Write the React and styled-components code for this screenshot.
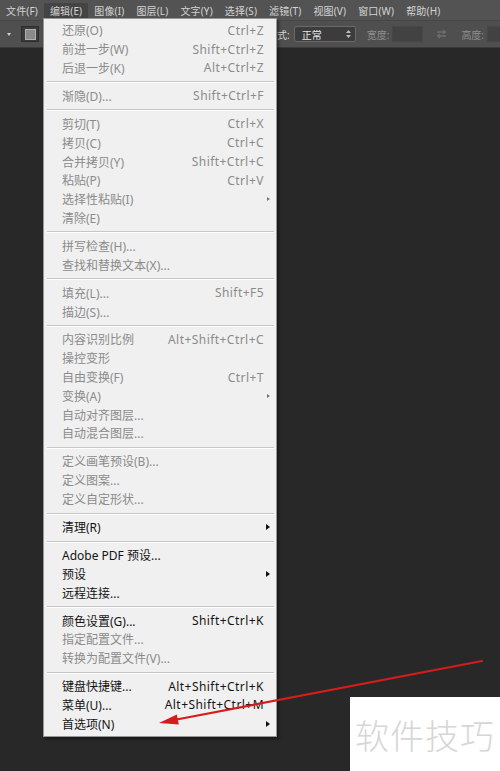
import styled, { createGlobalStyle } from 'styled-components';

const GlobalStyle = createGlobalStyle`
  body {
    margin: 0;
    background: #282828;
    font-family: "Noto Sans", "Noto Sans CJK SC", sans-serif;
  }
`;

const topMenus = ['文件(F)', '编辑(E)', '图像(I)', '图层(L)', '文字(Y)', '选择(S)', '滤镜(T)', '视图(V)', '窗口(W)', '帮助(H)'];

const sections = [
  [
    { label: '还原(O)', shortcut: 'Ctrl+Z' },
    { label: '前进一步(W)', shortcut: 'Shift+Ctrl+Z' },
    { label: '后退一步(K)', shortcut: 'Alt+Ctrl+Z' },
  ],
  [{ label: '渐隐(D)...', shortcut: 'Shift+Ctrl+F' }],
  [
    { label: '剪切(T)', shortcut: 'Ctrl+X' },
    { label: '拷贝(C)', shortcut: 'Ctrl+C' },
    { label: '合并拷贝(Y)', shortcut: 'Shift+Ctrl+C' },
    { label: '粘贴(P)', shortcut: 'Ctrl+V' },
    { label: '选择性粘贴(I)', sub: true },
    { label: '清除(E)' },
  ],
  [
    { label: '拼写检查(H)...' },
    { label: '查找和替换文本(X)...' },
  ],
  [
    { label: '填充(L)...', shortcut: 'Shift+F5' },
    { label: '描边(S)...' },
  ],
  [
    { label: '内容识别比例', shortcut: 'Alt+Shift+Ctrl+C' },
    { label: '操控变形' },
    { label: '自由变换(F)', shortcut: 'Ctrl+T' },
    { label: '变换(A)', sub: true },
    { label: '自动对齐图层...' },
    { label: '自动混合图层...' },
  ],
  [
    { label: '定义画笔预设(B)...' },
    { label: '定义图案...' },
    { label: '定义自定形状...' },
  ],
  [{ label: '清理(R)', sub: true, on: true }],
  [
    { label: 'Adobe PDF 预设...', on: true },
    { label: '预设', sub: true, on: true },
    { label: '远程连接...', on: true },
  ],
  [
    { label: '颜色设置(G)...', shortcut: 'Shift+Ctrl+K', on: true },
    { label: '指定配置文件...' },
    { label: '转换为配置文件(V)...' },
  ],
  [
    { label: '键盘快捷键...', shortcut: 'Alt+Shift+Ctrl+K', on: true },
    { label: '菜单(U)...', shortcut: 'Alt+Shift+Ctrl+M', on: true },
    { label: '首选项(N)', sub: true, on: true },
  ],
];

function App() {
  return (
    <Page>
      <GlobalStyle />
      <MenuBar>
        {topMenus.map((m) => (
          <TopItem key={m} $active={m === '编辑(E)'}>
            {m}
          </TopItem>
        ))}
      </MenuBar>
      <OptionsBar>
        <ToolArrow />
        <PresetIcon>
          <PresetInner />
        </PresetIcon>
        <OptLabel $gap={228}>样式:</OptLabel>
        <Select>
          正常
          <UpDown>
            <svg width="5" height="8" viewBox="0 0 5 8">
              <path d="M0 3 L2.5 0 L5 3 Z M0 5 L2.5 8 L5 5 Z" fill="#bdbdbd" />
            </svg>
          </UpDown>
        </Select>
        <OptLabel $gap={11} $dim>宽度:</OptLabel>
        <Field $w={31} />
        <SwapIcon>
          <svg width="11" height="10" viewBox="0 0 11 10">
            <path d="M1 3 H9 M7 1 L9.5 3 L7 5 M10 7 H2 M4 5 L1.5 7 L4 9" stroke="#6d6d6d" strokeWidth="1.3" fill="none" />
          </svg>
        </SwapIcon>
        <OptLabel $gap={14} $dim>高度:</OptLabel>
        <Field $w={40} />
      </OptionsBar>
      <Canvas />

      <Dropdown>
        {sections.map((items, i) => (
          <Section key={i}>
            {i > 0 && <Separator />}
            {items.map((it) => (
              <Item key={it.label} $on={it.on}>
                <span>{it.label}</span>
                <Shortcut>{it.shortcut}</Shortcut>
                <SubSlot>{it.sub && <SubArrow $on={it.on} />}</SubSlot>
              </Item>
            ))}
          </Section>
        ))}
      </Dropdown>

      <Pointer width="500" height="771" viewBox="0 0 500 771">
        <line x1="482" y1="661" x2="174" y2="720" stroke="#d51c1c" strokeWidth="2.2" strokeLinecap="round" />
        <path d="M159 723 L178.8 724.6 L176.8 714.4 Z" fill="#d51c1c" />
      </Pointer>

      <Watermark>软件技巧</Watermark>
    </Page>
  );
}

const Page = styled.div`
  position: relative;
  width: 500px;
  height: 771px;
  overflow: hidden;
  display: flex;
  flex-direction: column;
  background: #282828;
`;

const MenuBar = styled.div`
  height: 20px;
  display: flex;
  align-items: center;
  background: #535353;
`;

const TopItem = styled.div`
  height: 15px;
  padding: 0 6px;
  display: flex;
  align-items: center;
  flex-shrink: 0;
  font-size: 10px;
  letter-spacing: 0.15px;
  color: #d4d4d4;
  background: ${(p) => (p.$active ? '#444444' : 'transparent')};
  white-space: nowrap;
`;

const OptionsBar = styled.div`
  height: 28px;
  display: flex;
  align-items: center;
  background: #4f4f4f;
  border-top: 1px solid #474747;
  border-bottom: 1px solid #3a3a3a;
  box-sizing: border-box;
  flex-shrink: 0;

  & > * {
    flex-shrink: 0;
  }
`;

const ToolArrow = styled.div`
  margin-left: 7px;
  width: 0;
  height: 0;
  border-left: 2.5px solid transparent;
  border-right: 2.5px solid transparent;
  border-top: 3px solid #d0d0d0;
`;

const PresetIcon = styled.div`
  margin-left: 10px;
  width: 18px;
  height: 16px;
  box-sizing: border-box;
  background: #3a3a3a;
  border: 1px solid #2e2e2e;
  display: flex;
  align-items: center;
  justify-content: center;
`;

const PresetInner = styled.div`
  width: 9px;
  height: 9px;
  background: #8a8a8a;
  border: 1px solid #b0b0b0;
`;

const OptLabel = styled.div`
  margin-left: ${(p) => p.$gap}px;
  font-size: 10px;
  color: ${(p) => (p.$dim ? '#8e8e8e' : '#d8d8d8')};
  white-space: nowrap;
`;

const Select = styled.div`
  position: relative;
  margin-left: 4px;
  width: 62px;
  height: 16px;
  box-sizing: border-box;
  padding-left: 7px;
  display: flex;
  align-items: center;
  font-size: 10px;
  color: #e6e6e6;
  background: #3c3c3c;
  border: 1px solid #6a6a6a;
  border-radius: 2px;
`;

const UpDown = styled.span`
  position: absolute;
  right: 4px;
  top: 3px;
  display: flex;
`;

const Field = styled.div`
  margin-left: 3px;
  width: ${(p) => p.$w}px;
  height: 16px;
  box-sizing: border-box;
  background: #424242;
  border: 1px solid #474747;
`;

const SwapIcon = styled.div`
  margin-left: 13px;
  display: flex;
`;

const Canvas = styled.div`
  flex: 1;
  background: #282828;
`;

const Dropdown = styled.div`
  position: absolute;
  left: 43px;
  top: 18px;
  width: 234px;
  box-sizing: border-box;
  padding: 2px 0 3px;
  background: #f0f0f0;
  border: 1px solid #979797;
  box-shadow: 2px 2px 3px rgba(0, 0, 0, 0.45);
  font-family: "Noto Sans", "Noto Sans CJK SC", sans-serif;
`;

const Section = styled.div`
  display: flex;
  flex-direction: column;
`;

const Separator = styled.div`
  height: 9.2px;
  display: flex;
  align-items: center;
  padding: 0 2px 0 3px;

  &::after {
    content: '';
    flex: 1;
    height: 1px;
    background: #c6c6c6;
    box-shadow: 0 1px 0 #ffffff;
  }
`;

const Item = styled.div`
  height: 18.8px;
  display: grid;
  grid-template-columns: 1fr auto 6px;
  align-items: center;
  padding: 0 6px 0 18px;
  font-size: 12px;
  color: ${(p) => (p.$on ? '#141414' : '#8b8b8b')};
  white-space: nowrap;
`;

const Shortcut = styled.span`
  text-align: right;
  letter-spacing: 0.45px;
`;

const SubSlot = styled.span`
  display: flex;
  justify-content: flex-end;
`;

const SubArrow = styled.span`
  width: 0;
  height: 0;
  border-top: ${(p) => (p.$on ? 3.5 : 2.5)}px solid transparent;
  border-bottom: ${(p) => (p.$on ? 3.5 : 2.5)}px solid transparent;
  border-left: ${(p) => (p.$on ? 4 : 3)}px solid ${(p) => (p.$on ? '#111' : '#777')};
`;

const Pointer = styled.svg`
  position: absolute;
  left: 0;
  top: 0;
  pointer-events: none;
`;

const Watermark = styled.div`
  position: absolute;
  right: 0;
  bottom: 0;
  width: 150px;
  height: 74px;
  display: flex;
  align-items: center;
  justify-content: center;
  background: #ffffff;
  color: #d6d6d6;
  font-family: "Noto Sans CJK SC", sans-serif;
  font-size: 34px;
  font-weight: 300;
  letter-spacing: 1px;
`;

export default App;
